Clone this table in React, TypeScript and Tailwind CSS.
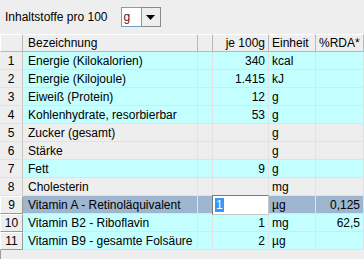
import { FC } from "react";

type Row = {
  name: string;
  amount: string;
  unit: string;
  rda: string;
  kind: "cyan" | "grey" | "selected";
};

const rows: Row[] = [
  { name: "Energie (Kilokalorien)", amount: "340", unit: "kcal", rda: "", kind: "cyan" },
  { name: "Energie (Kilojoule)", amount: "1.415", unit: "kJ", rda: "", kind: "cyan" },
  { name: "Eiweiß (Protein)", amount: "12", unit: "g", rda: "", kind: "cyan" },
  { name: "Kohlenhydrate, resorbierbar", amount: "53", unit: "g", rda: "", kind: "cyan" },
  { name: "Zucker (gesamt)", amount: "", unit: "g", rda: "", kind: "grey" },
  { name: "Stärke", amount: "", unit: "g", rda: "", kind: "grey" },
  { name: "Fett", amount: "9", unit: "g", rda: "", kind: "cyan" },
  { name: "Cholesterin", amount: "", unit: "mg", rda: "", kind: "grey" },
  { name: "Vitamin A - Retinoläquivalent", amount: "1", unit: "µg", rda: "0,125", kind: "selected" },
  { name: "Vitamin B2 - Riboflavin", amount: "1", unit: "mg", rda: "62,5", kind: "cyan" },
  { name: "Vitamin B9 - gesamte Folsäure", amount: "2", unit: "µg", rda: "", kind: "cyan" },
];

const bgFor = (kind: Row["kind"]) =>
  kind === "cyan" ? "bg-[#c4ffff]" : kind === "selected" ? "bg-[#9fb6d1]" : "bg-[#eeeeee]";

const cell = "h-[18px] border-r border-b border-[#e2e2e2] flex items-center overflow-hidden whitespace-nowrap";
const head = "h-[18px] border-r border-b border-t border-[#b8b8b8] border-t-[#ffffff] flex items-center whitespace-nowrap bg-[#eeeeee]";

const App: FC = () => {
  return (
    <div
      className="w-[364px] h-[259px] bg-[#eeeeee] text-[12px] text-black overflow-hidden flex flex-col"
      style={{ fontFamily: '"Liberation Sans", Arial, sans-serif' }}
    >
      {/* top bar */}
      <div className="h-[34px] flex items-center pl-[5px] gap-[13px]">
        <span>Inhaltstoffe pro 100</span>
        <div className="flex h-[20px]">
          <div className="w-[21px] bg-white border border-[#7c9cc0] flex items-center pl-[2px] text-[#5a1530]">
            g
          </div>
          <div className="w-[19px] border border-l-0 border-[#8a8a8a] bg-[#eeeeee] flex items-center justify-center">
            <svg width="9" height="5" viewBox="0 0 9 5">
              <path d="M0 0 H9 L4.5 5 Z" fill="#000" />
            </svg>
          </div>
        </div>
      </div>

      {/* table */}
      <div className="grid grid-cols-[23px_175px_15px_56px_47px_48px]">
        <div className={head + " border-l border-l-[#ffffff]"} />
        <div className={head + " pl-[5px]"}>Bezeichnung</div>
        <div className={head} />
        <div className={head + " justify-end pr-[3px]"}>je 100g</div>
        <div className={head + " pl-[3px]"}>Einheit</div>
        <div className={head + " pl-[3px]"}>%RDA*</div>

        {rows.map((r, i) => {
          const bg = bgFor(r.kind);
          const raised = i >= 8;
          return (
            <div key={i} className="contents">
              <div
                className={
                  raised
                    ? "h-[18px] flex items-center justify-center bg-[#eeeeee] border border-t-white border-l-white border-b-[#9a9a9a] border-r-[#9a9a9a]"
                    : cell + " justify-center bg-[#eeeeee] border-r-[#c8c8c8]"
                }
              >
                {i + 1}
              </div>
              <div className={`${cell} ${bg} pl-[5px]`}>{r.name}</div>
              <div className={`${cell} ${bg}`} />
              {r.kind === "selected" ? (
                <div className={`${cell} ${bg} relative overflow-visible`}>
                  <div className="absolute left-[-1px] top-[-1px] w-[57px] h-[20px] bg-white border border-t-[#7a7a7a] border-l-[#7a7a7a] border-r-[#c8c8c8] border-b-[#c8c8c8] flex items-center pl-[2px]">
                    <span className="bg-[#3399ff] text-white px-[1px] leading-[14px]">1</span>
                  </div>
                </div>
              ) : (
                <div className={`${cell} ${bg} justify-end pr-[3px]`}>{r.amount}</div>
              )}
              <div className={`${cell} ${bg} pl-[3px]`}>{r.unit}</div>
              <div className={`${cell} ${bg} justify-end pr-[3px]`}>{r.rda}</div>
            </div>
          );
        })}
      </div>
      <div className="flex-1 w-[23px] border-l border-[#9a9a9a]" />
    </div>
  );
};

export default App;
